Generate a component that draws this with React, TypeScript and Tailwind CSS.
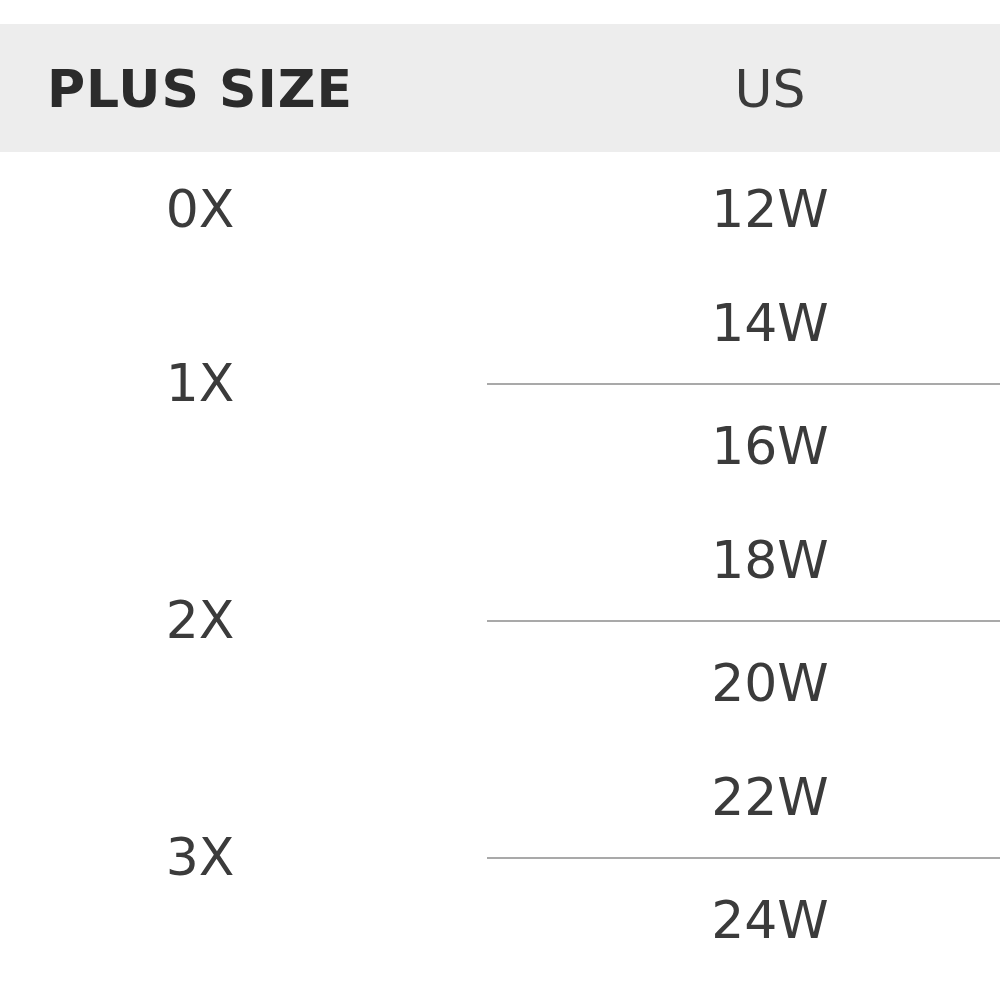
const GROUPS = [
  { plus: "1X", us: ["14W", "16W"] },
  { plus: "2X", us: ["18W", "20W"] },
  { plus: "3X", us: ["22W", "24W"] },
];

export default function App() {
  return (
    <div className="h-[1000px] w-[1000px] overflow-hidden bg-white pt-[24px] font-['DejaVu_Sans',Verdana,sans-serif] text-[52px] leading-none text-[#3b3b3b]">
      {/* Header */}
      <div className="flex h-[128px] bg-[#ededed]">
        <div className="flex w-[400px] shrink-0 items-center justify-center pt-[2px] font-bold tracking-[1px] text-[#2b2b2b]">
          PLUS SIZE
        </div>
        <div className="ml-[87px] flex w-[566px] shrink-0 items-center justify-center pt-[2px]">US</div>
      </div>

      {/* 0X row */}
      <div className="flex h-[113px]">
        <div className="flex w-[400px] shrink-0 items-center justify-center">0X</div>
        <div className="ml-[87px] flex w-[566px] shrink-0 items-center justify-center">12W</div>
      </div>

      {GROUPS.map((g) => (
        <div key={g.plus} className="flex h-[237px]">
          <div className="flex w-[400px] shrink-0 items-center justify-center pb-[2px]">{g.plus}</div>
          <div className="ml-[87px] flex w-[566px] shrink-0 flex-col">
            <div className="flex h-[120px] items-center justify-center border-b-2 border-[#a9a9a9] pb-[2px]">
              {g.us[0]}
            </div>
            <div className="flex h-[117px] items-center justify-center pt-[4px]">{g.us[1]}</div>
          </div>
        </div>
      ))}
    </div>
  );
}
